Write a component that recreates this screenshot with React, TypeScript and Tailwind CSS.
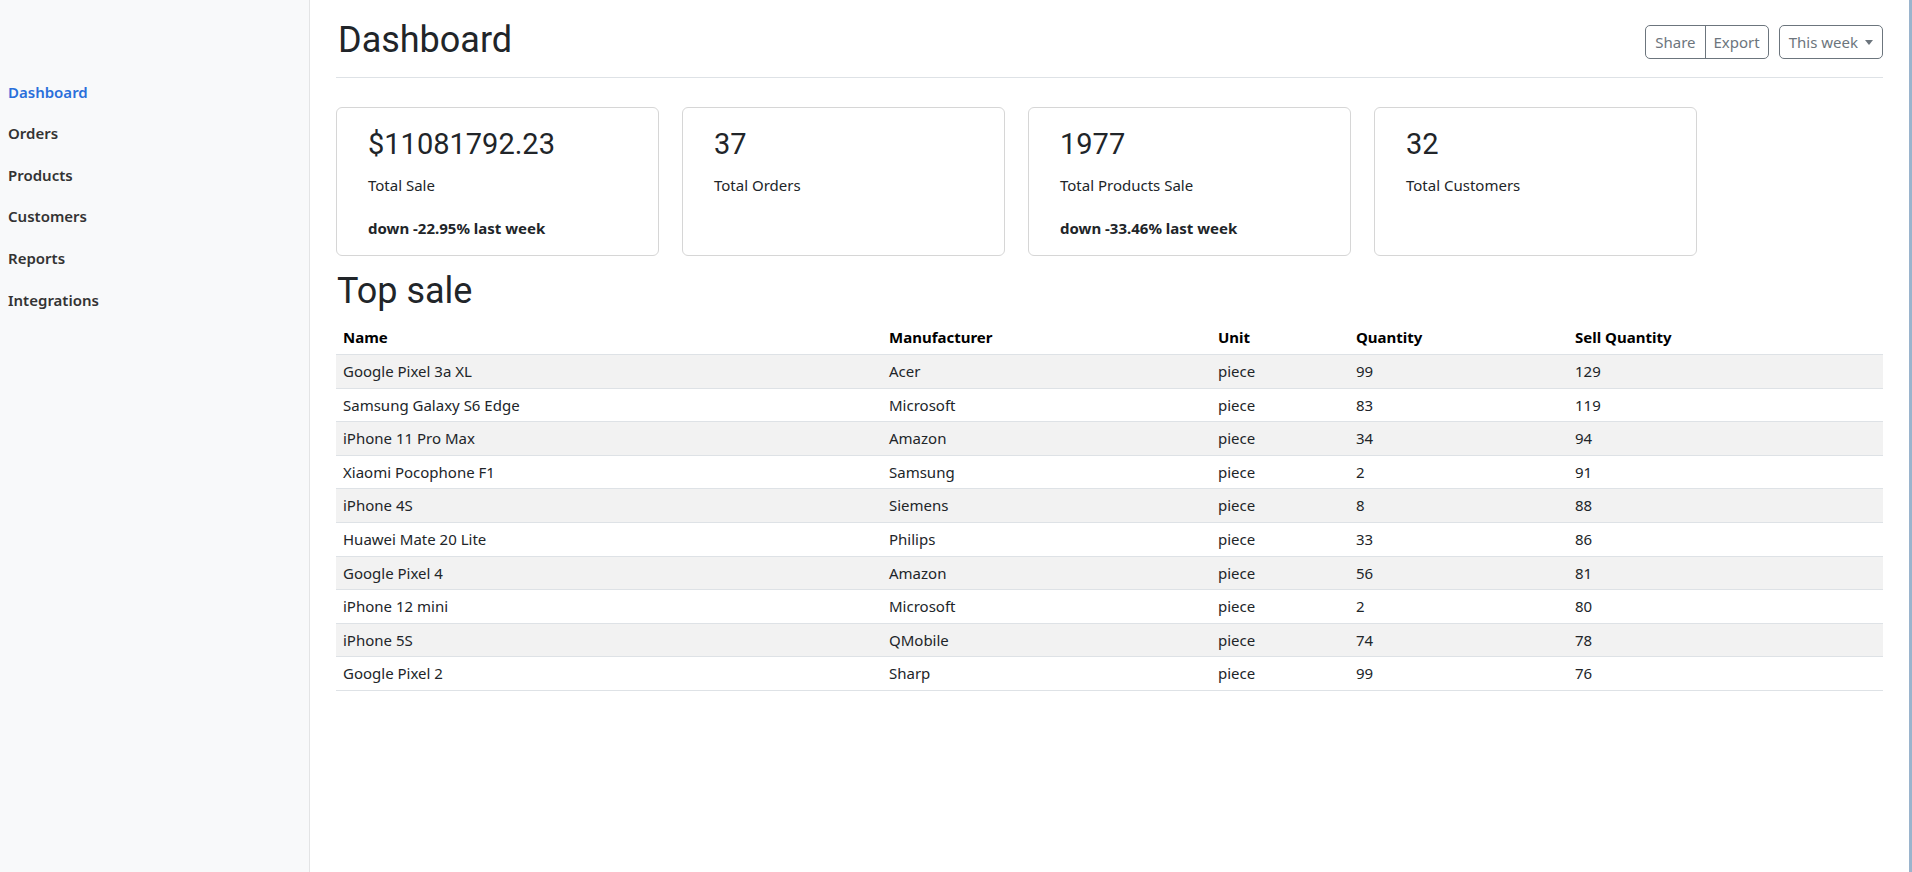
const navItems = ["Dashboard", "Orders", "Products", "Customers", "Reports", "Integrations"];

const stats = [
  { value: "$11081792.23", label: "Total Sale", note: "down -22.95% last week" },
  { value: "37", label: "Total Orders" },
  { value: "1977", label: "Total Products Sale", note: "down -33.46% last week" },
  { value: "32", label: "Total Customers" },
];

const rows = [
  ["Google Pixel 3a XL", "Acer", "piece", "99", "129"],
  ["Samsung Galaxy S6 Edge", "Microsoft", "piece", "83", "119"],
  ["iPhone 11 Pro Max", "Amazon", "piece", "34", "94"],
  ["Xiaomi Pocophone F1", "Samsung", "piece", "2", "91"],
  ["iPhone 4S", "Siemens", "piece", "8", "88"],
  ["Huawei Mate 20 Lite", "Philips", "piece", "33", "86"],
  ["Google Pixel 4", "Amazon", "piece", "56", "81"],
  ["iPhone 12 mini", "Microsoft", "piece", "2", "80"],
  ["iPhone 5S", "QMobile", "piece", "74", "78"],
  ["Google Pixel 2", "Sharp", "piece", "99", "76"],
];

const cols = "grid grid-cols-[546px_329px_138px_219px_1fr]";

export default function App() {
  return (
    <div className="flex h-screen bg-white font-['Noto_Sans',sans-serif] text-[#212529]">
      <aside className="w-[310px] shrink-0 bg-[#f8f9fa] border-r border-[#e3e4e5] pt-[71px]">
        {navItems.map((item, i) => (
          <div
            key={item}
            className={`h-[41.6px] flex items-center px-2 text-[15px] font-semibold ${
              i === 0 ? "text-[#2a6fdb]" : "text-[#333]"
            }`}
          >
            {item}
          </div>
        ))}
      </aside>

      <main className="flex-1 px-[26px]">
        <div className="flex items-start justify-between pt-[16px] pb-[13px] border-b border-[#dee2e6]">
          <h1 className="font-['Roboto',sans-serif] text-[36px] leading-[48px] font-normal pl-[2px]">
            Dashboard
          </h1>
          <div className="flex gap-[10px] mt-[9px] text-[15px] text-[#6c757d]">
            <div className="flex h-[34px] border border-[#6c757d] rounded-[5px]">
              <span className="px-[9px] flex items-center border-r border-[#6c757d]">Share</span>
              <span className="px-[8px] flex items-center">Export</span>
            </div>
            <div className="flex h-[34px] items-center gap-[7px] px-[9px] border border-[#6c757d] rounded-[5px]">
              <span>This week</span>
              <span className="w-0 h-0 border-x-[4px] border-x-transparent border-t-[5px] border-t-[#6c757d]" />
            </div>
          </div>
        </div>

        <div className="flex gap-[23px] mt-[29px]">
          {stats.map((s) => (
            <div
              key={s.label}
              className="w-[323px] h-[149px] border border-[#d6d6d6] rounded-[6px] px-[31px] pt-[16px]"
            >
              <div className="font-['Roboto',sans-serif] text-[29px] leading-[40px]">{s.value}</div>
              <div className="text-[15px] leading-[24px] mt-[9px]">{s.label}</div>
              {s.note && (
                <div className="text-[15px] leading-[24px] mt-[19px] font-bold">{s.note}</div>
              )}
            </div>
          ))}
        </div>

        <h2 className="font-['Roboto',sans-serif] text-[36px] leading-[48px] font-normal mt-[11px] pl-[1px]">
          Top sale
        </h2>

        <div className="mt-[6px] text-[15px]">
          <div className={`${cols} h-[34px] items-center border-b border-[#dee2e6] font-bold text-black`}>
            <div className="px-[7px]">Name</div>
            <div className="px-[7px]">Manufacturer</div>
            <div className="px-[7px]">Unit</div>
            <div className="px-[7px]">Quantity</div>
            <div className="px-[7px]">Sell Quantity</div>
          </div>
          {rows.map((r, i) => (
            <div
              key={r[0]}
              className={`${cols} h-[33.6px] items-center border-b border-[#dee2e6] ${
                i % 2 === 0 ? "bg-[#f2f2f2]" : "bg-white"
              }`}
            >
              {r.map((c, j) => (
                <div key={j} className="px-[7px]">
                  {c}
                </div>
              ))}
            </div>
          ))}
        </div>
      </main>

      <div className="w-[3px] shrink-0 bg-[#9ab4cd]" />
    </div>
  );
}
